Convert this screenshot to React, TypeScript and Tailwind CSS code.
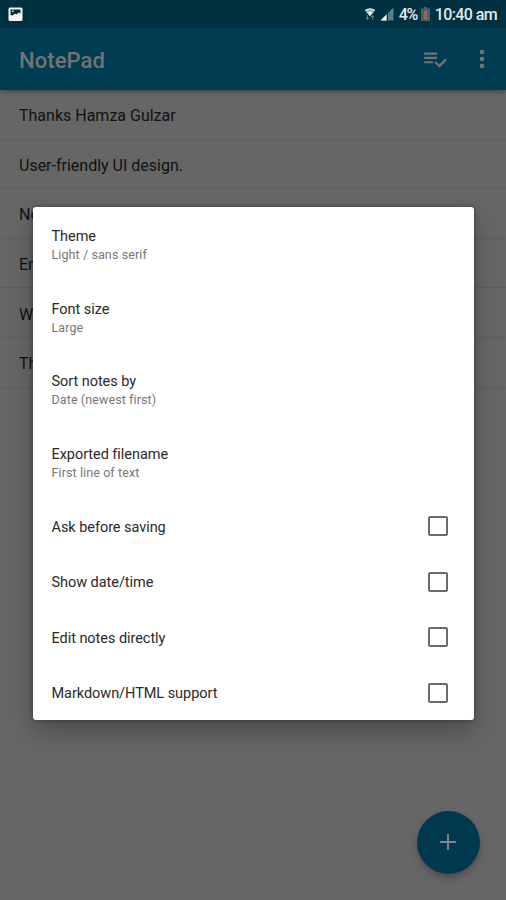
import type { FC } from "react";

const NOTES = ["Thanks Hamza Gulzar", "User-friendly UI design.", "No", "En", "W", "Th"];

const OPTIONS = [
  { title: "Theme", value: "Light / sans serif" },
  { title: "Font size", value: "Large" },
  { title: "Sort notes by", value: "Date (newest first)" },
  { title: "Exported filename", value: "First line of text" },
];

const TOGGLES = ["Ask before saving", "Show date/time", "Edit notes directly", "Markdown/HTML support"];

const StatusBar: FC = () => (
  <div className="flex h-7 items-center bg-[#003141] pl-2 pr-[9px] text-[#e3e9eb]">
    <svg className="h-[15px] w-[15px]" viewBox="0 0 15 15">
      <rect x="0.5" y="0.5" width="14" height="13.5" rx="1.5" fill="#f4f6f6" />
      <path d="M2.500 2.500h10v4l-2-1-2 2-1.500-1L4.500 8.500l-2-.5z" fill="#0b2732" />
      <path d="M4 3.500h1.500v1.500H4z" fill="#f4f6f6" />
    </svg>
    <svg className="ml-auto h-[14px] w-3" viewBox="0 0 12 14">
      <path d="M0.800 3Q6-0.500 11.200 3L6 9.500z" fill="#dce4e6" />
      <path d="M2.500 4.500Q6 2.500 9.500 4.500" stroke="#476b77" fill="none" strokeWidth="0.800" />
      <path d="M3.500 8.500v4M2 10.800l1.500 1.700L5 10.800M8.500 12.500v-4M7 10.200l1.500-1.700 1.500 1.700" stroke="#6b8790" fill="none" />
    </svg>
    <svg className="ml-[4px] h-[14px] w-[14px]" viewBox="0 0 14 14">
      <path d="M13.500 0.500V13.500H0.500z" fill="#5a7d89" />
      <path d="M6.500 7.500V13.500H0.500z" fill="#eef2f3" />
      <path d="M7.500 6v8" stroke="#003141" />
    </svg>
    <span className="ml-[5px] w-[19px] whitespace-nowrap pt-[2px] text-[16px] font-medium tracking-[-1.200px]">4%</span>
    <svg className="ml-[3px] h-[14px] w-[9px]" viewBox="0 0 9 14">
      <path d="M3 0h3v1.500h3V14H0V1.500h3z" fill="#4a616a" />
      <path d="M3 4h3v8H3z" fill="#a5645a" />
    </svg>
    <span className="ml-[5px] whitespace-nowrap pt-[2px] text-[16px] font-medium tracking-[-0.600px]">10:40 am</span>
  </div>
);

const AppBar: FC = () => (
  <header className="relative flex h-[62px] items-center bg-[#003d52] pl-[19px] pr-[18px] text-[#737373] shadow-[0_2px_4px_rgba(0,0,0,0.3)]">
    <h1 className="pt-[3px] text-[22px] font-medium leading-none tracking-[0.100px]">NotePad</h1>
    <svg className="ml-auto h-[26px] w-[26px]" viewBox="0 0 24 24" fill="currentColor">
      <path d="M14 10H2v2h12v-2zm0-4H2v2h12V6zM2 14v2h8v-2H2zm19.500-2.500L23 13l-6.990 7-4.510-4.500L13 14l3.010 3 5.490-5.500z" />
    </svg>
    <svg className="ml-[28px] h-5 w-3" viewBox="0 0 12 20" fill="currentColor">
      <circle cx="6" cy="3" r="2.300" />
      <circle cx="6" cy="10" r="2.300" />
      <circle cx="6" cy="17" r="2.300" />
    </svg>
  </header>
);

export default function App() {
  return (
    <main className="relative h-[900px] w-[506px] overflow-hidden bg-[#666] font-[Roboto,sans-serif]">
      <StatusBar />
      <AppBar />

      <ul>
        {NOTES.map((note) => (
          <li key={note} className="flex h-[49.600px] items-center border-b border-[#5e5e5e] pl-[19px] pt-[4px] text-[16px] text-[#111]">
            {note}
          </li>
        ))}
      </ul>

      {/* Add note button */}
      <button className="absolute left-[416.500px] top-[810.500px] flex h-[63px] w-[63px] items-center justify-center rounded-full bg-[#00394d] shadow-[0_4px_7px_rgba(0,0,0,0.25)]">
        <svg className="h-4 w-4" viewBox="0 0 16 16" stroke="#858585" strokeWidth="2">
          <path d="M8 0v16M0 8h16" />
        </svg>
      </button>

      {/* Settings dialog */}
      <section className="absolute left-[33px] top-[207px] w-[441px] rounded-[3px] bg-white pt-[0.500px] shadow-[0_12px_24px_rgba(0,0,0,0.25),0_0_5px_rgba(0,0,0,0.35)]">
        {OPTIONS.map(({ title, value }) => (
          <div key={title} className="flex h-[72.700px] flex-col justify-center pl-[18.500px] pt-[2px]">
            <p className="text-[14.500px] leading-[19px] tracking-[-0.050px] text-[#2a2a2a]">{title}</p>
            <p className="text-[12.500px] leading-[17px] tracking-[0.100px] text-[#777]">{value}</p>
          </div>
        ))}
        {TOGGLES.map((label) => (
          <label key={label} className="flex h-[55.500px] items-center justify-between pl-[18.500px] pr-[26.500px] text-[14.500px] tracking-[-0.050px] text-[#2a2a2a]">
            <span className="pt-[3px]">{label}</span>
            <span className="h-5 w-5 rounded-[2px] border-2 border-[#6a6a6a]" />
          </label>
        ))}
      </section>
    </main>
  );
}
